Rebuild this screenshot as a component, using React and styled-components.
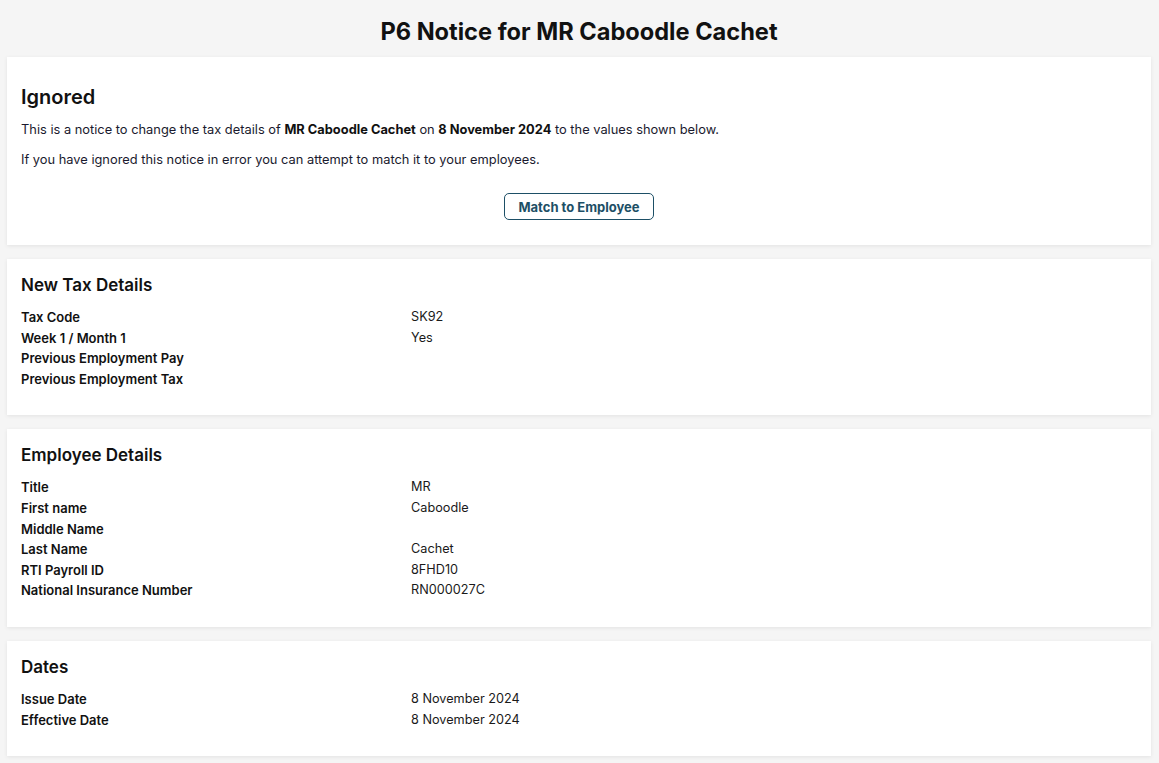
import React from "react";
import styled, { createGlobalStyle } from "styled-components";

const Global = createGlobalStyle`
  html, body { margin: 0; padding: 0; background: #f5f5f5; }
  body { font-family: Inter, "Noto Sans", sans-serif; color: #111; }
`;

const Page = styled.div`
  padding: 0 8px 7px 7px;
`;

const Title = styled.h1`
  margin: 0;
  padding: 18px 0 11px;
  text-align: center;
  font-size: 23.6px;
  line-height: 28px;
  font-weight: 700;
  color: #111;
`;

const Stack = styled.div`
  display: flex;
  flex-direction: column;
  gap: 14px;
`;

const Card = styled.section`
  background: #fff;
  box-shadow: 0 1px 4px rgba(0, 0, 0, 0.08);
  padding: ${(p) => p.$pad || "15px 14px 26px"};
`;

const BigHeading = styled.h2`
  margin: 0 0 12px;
  font-size: 20px;
  line-height: 24px;
  font-weight: 600;
`;

const Para = styled.p`
  margin: 0 0 12px;
  font-size: 12.85px;
  line-height: 18px;
  color: #1a1a2e;
  b { font-weight: 700; color: #111; }
`;

const Center = styled.div`
  display: flex;
  justify-content: center;
  padding-top: 12px;
`;

const Button = styled.button`
  font-family: inherit;
  font-size: 13px;
  font-weight: 700;
  color: #1d4f66;
  background: #fff;
  border: 1px solid #1d4f66;
  border-radius: 5px;
  height: 27px;
  padding: 0 13px;
  cursor: pointer;
`;

const Heading = styled.h3`
  margin: 0 0 11px;
  font-size: 17px;
  line-height: 22px;
  font-weight: 600;
`;

const Grid = styled.dl`
  margin: 0;
  display: grid;
  grid-template-columns: 390px 1fr;
  font-size: 13px;
  line-height: 20.6px;
`;

const Label = styled.dt`
  font-weight: 600;
  color: #111;
`;

const Value = styled.dd`
  margin: 0;
  color: #1a1a1a;
  font-size: 12.7px;
`;

const Details = ({ rows }) => (
  <Grid>
    {rows.map(([k, v]) => (
      <React.Fragment key={k}>
        <Label>{k}</Label>
        <Value>{v || "\u00a0"}</Value>
      </React.Fragment>
    ))}
  </Grid>
);

export default function App() {
  return (
    <>
      <Global />
      <Page>
        <Title>P6 Notice for MR Caboodle Cachet</Title>
        <Stack>
          <Card $pad="28px 14px 25px">
            <BigHeading>Ignored</BigHeading>
            <Para>
              This is a notice to change the tax details of <b>MR Caboodle Cachet</b> on{" "}
              <b>8 November 2024</b> to the values shown below.
            </Para>
            <Para>If you have ignored this notice in error you can attempt to match it to your employees.</Para>
            <Center>
              <Button>Match to Employee</Button>
            </Center>
          </Card>
          <Card>
            <Heading>New Tax Details</Heading>
            <Details
              rows={[
                ["Tax Code", "SK92"],
                ["Week 1 / Month 1", "Yes"],
                ["Previous Employment Pay", ""],
                ["Previous Employment Tax", ""],
              ]}
            />
          </Card>
          <Card>
            <Heading>Employee Details</Heading>
            <Details
              rows={[
                ["Title", "MR"],
                ["First name", "Caboodle"],
                ["Middle Name", ""],
                ["Last Name", "Cachet"],
                ["RTI Payroll ID", "8FHD10"],
                ["National Insurance Number", "RN000027C"],
              ]}
            />
          </Card>
          <Card>
            <Heading>Dates</Heading>
            <Details
              rows={[
                ["Issue Date", "8 November 2024"],
                ["Effective Date", "8 November 2024"],
              ]}
            />
          </Card>
        </Stack>
      </Page>
    </>
  );
}
